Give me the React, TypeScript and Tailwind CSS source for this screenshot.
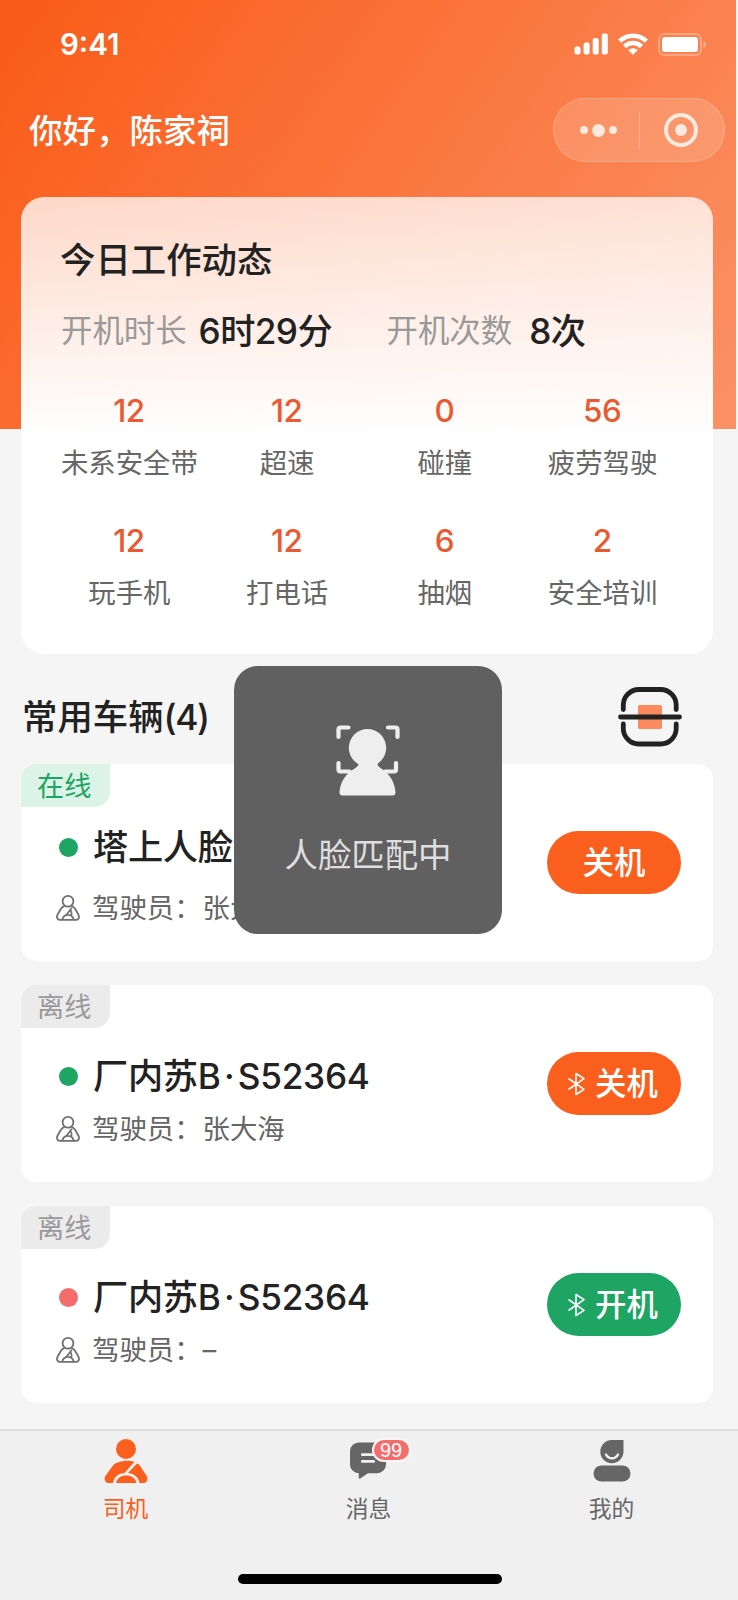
import { Fragment, ReactNode } from "react";
import clsx from "clsx";

type Vehicle = {
  online: boolean;
  name: string;
  driver: string;
  running: boolean;
  action: string;
  bluetooth: boolean;
};

const stats = [
  { value: "12", label: "未系安全带" },
  { value: "12", label: "超速" },
  { value: "0", label: "碰撞" },
  { value: "56", label: "疲劳驾驶" },
  { value: "12", label: "玩手机" },
  { value: "12", label: "打电话" },
  { value: "6", label: "抽烟" },
  { value: "2", label: "安全培训" },
];

const vehicles: Vehicle[] = [
  { online: true, name: "塔上人脸识别", driver: "张大海", running: true, action: "关机", bluetooth: false },
  { online: false, name: "厂内苏B·S52364", driver: "张大海", running: true, action: "关机", bluetooth: true },
  { online: false, name: "厂内苏B·S52364", driver: "–", running: false, action: "开机", bluetooth: true },
];

const StatusBar = () => (
  <div className="flex h-[88px] items-center justify-between pl-[60px] pr-[29px] text-white">
    <span className="text-[29.500px] font-semibold leading-[30px]">9:41</span>
    <div className="flex items-center">
      <svg width="35" height="22" viewBox="0 0 35 22" fill="currentColor">
        <rect x="0.5" y="13.5" width="6" height="8" rx="2" />
        <rect x="9.6" y="9.5" width="6" height="12" rx="2" />
        <rect x="18.7" y="5" width="6" height="16.5" rx="2" />
        <rect x="27.8" y="0.5" width="6" height="21" rx="2" />
      </svg>
      <svg className="ml-[9px]" width="30" height="22" viewBox="0 0 30 22" fill="none" stroke="currentColor" strokeWidth="4.600">
        <path d="M1.600 8.200a19.300 19.300 0 0 1 26.800 0" />
        <path d="M6.500 13.500a12.200 12.200 0 0 1 17 0" />
        <path d="M15 21.800l-4.800-4.700a7 7 0 0 1 9.600 0z" fill="currentColor" stroke="none" />
      </svg>
      <svg className="ml-[10px]" width="49" height="23" viewBox="0 0 49 23">
        <rect x="1" y="1" width="42" height="21" rx="5.5" fill="none" stroke="#fff" strokeOpacity="0.3" strokeWidth="2" />
        <rect x="4" y="4" width="36" height="15" rx="3" fill="#fff" />
        <path d="M45.5 8c3 1.300 3 5.700 0 7z" fill="#fff" fillOpacity="0.4" />
      </svg>
    </div>
  </div>
);

const NavBar = () => (
  <div className="flex h-[84px] items-center justify-between pl-[29px] pr-[11px]">
    <h1 className="pt-px text-[33.500px] font-medium leading-[40px] text-white">你好，陈家祠</h1>
    <div className="flex h-[64px] w-[172px] items-center rounded-full border border-white/20 bg-white/15 text-[#fee9df]">
      <div className="flex w-[85px] items-center justify-center gap-[4px] pl-[3px]">
        <i className="size-[8px] rounded-full bg-current" />
        <i className="size-[13px] rounded-full bg-current" />
        <i className="size-[8px] rounded-full bg-current" />
      </div>
      <div className="h-[37px] w-px bg-white/30" />
      <div className="flex flex-1 items-center justify-center pr-[2px]">
        <div className="flex size-[34px] items-center justify-center rounded-full border-4 border-current">
          <i className="size-[12px] rounded-full bg-current" />
        </div>
      </div>
    </div>
  </div>
);

const WorkCard = () => (
  <section className="-mt-[232px] ml-[21px] h-[457px] w-[692px] rounded-[23px] bg-[linear-gradient(180deg,rgba(255,255,255,0.75)_0%,#fff_53%)] pt-[44px]">
    <h2 className="pl-[39px] text-[35.400px] font-medium leading-[40px] text-[#222]">今日工作动态</h2>
    <div className="mt-[30px] flex h-[40px] items-center pl-[40px] leading-[40px]">
      <span className="text-[31.400px] text-[#999]">开机时长</span>
      <span className="ml-[12px] w-[190px] text-[35.200px] font-medium tracking-[-0.600px] text-[#222]">6时29分</span>
      <span className="-ml-[2px] text-[31.400px] text-[#999]">开机次数</span>
      <span className="ml-[17px] text-[35.200px] font-medium tracking-[-0.600px] text-[#222]">8次</span>
    </div>
    <div className="ml-[29px] mt-[44px] grid w-[631px] grid-cols-4 gap-y-[46px]">
      {stats.map((item) => (
        <div key={item.label} className="flex flex-col items-center gap-[20px]">
          <span className="text-[31.500px] font-medium leading-[32px] tracking-[-0.500px] text-[#ea5a31]">{item.value}</span>
          <span className="pl-px text-[27.400px] leading-[32px] text-[#666]">{item.label}</span>
        </div>
      ))}
    </div>
  </section>
);

const ScanIcon = () => (
  <svg width="64" height="60" viewBox="0 0 64 60" fill="none" stroke="#222" strokeWidth="4.800" strokeLinecap="round">
    <rect x="20" y="18" width="24" height="24" rx="1.500" fill="#fb8b5f" stroke="none" />
    <path d="M5.300 22.500V18A15.600 15.600 0 0 1 21 2.500h21.500A15.600 15.600 0 0 1 58.200 18v4.500" />
    <path d="M5.300 37v4.500A15.600 15.600 0 0 0 21 57h21.500a15.600 15.600 0 0 0 15.700-15.500V37" />
    <path d="M2.500 30h59" />
  </svg>
);

const DriverOutlineIcon = () => (
  <svg width="24" height="26" viewBox="0 0 24 26" fill="none" stroke="#707070" strokeWidth="1.800" strokeLinejoin="round">
    <circle cx="12" cy="6.300" r="5.400" />
    <path d="M8.500 11.200C6.800 11.600 5.800 12.500 4.800 14L1.500 19.800c-1.200 2.400-.2 5 2 5h17c2.200 0 3.200-2.600 2-5L19.200 14c-1-1.500-2-2.400-3.700-2.800" />
    <path d="M6.300 24.500c.8-3 3-4.700 5.700-4.700s4.900 1.700 5.700 4.700M15.800 12.800l-5.300 7M15 15.500c.6 2 1.200 3.500 0 5" />
  </svg>
);

const BluetoothIcon = () => (
  <svg width="17" height="24" viewBox="0 0 17 24" fill="none" stroke="#fff" strokeWidth="1.600" strokeLinejoin="round">
    <path d="M0.500 6.500L16 17.300l-8 5.200V1.500l8 5.200L0.500 17.500" />
  </svg>
);

// the dot of a plate number gets some room on both sides
const PlateName = ({ name }: { name: string }) => (
  <>
    {name.split("·").map((part, index) => (
      <Fragment key={index}>
        {index > 0 && <span className="px-[3.500px]">·</span>}
        {part}
      </Fragment>
    ))}
  </>
);

const VehicleCard = ({ vehicle }: { vehicle: Vehicle }) => (
  <li className="flex h-[197px] w-[692px] items-center justify-between overflow-hidden rounded-[15px] bg-white pr-[32px]">
    <div className="h-full">
      <div
        className={clsx(
          "h-[43px] w-[89px] rounded-br-[15px] pl-[16px] pt-px text-[27.200px] leading-[43px]",
          vehicle.online ? "bg-[#dcf4e8] text-[#1ea463]" : "bg-[#ebebeb] text-[#999]"
        )}
      >
        {vehicle.online ? "在线" : "离线"}
      </div>
      <div className={clsx("flex items-center pl-[38px]", vehicle.online ? "mt-[20px]" : "mt-[28px]")}>
        <i className={clsx("size-[19px] rounded-full", vehicle.running ? "bg-[#1ea463]" : "bg-[#f56c6c]")} />
        <h3 className="ml-[15px] pt-px text-[35.200px] font-medium leading-[39px] tracking-[-0.300px] text-[#222]">
          <PlateName name={vehicle.name} />
        </h3>
      </div>
      <div className={clsx("flex items-center pl-[35px]", vehicle.online ? "mt-[25px]" : "mt-[17px]")}>
        <DriverOutlineIcon />
        <span className="ml-[12px] text-[27.400px] leading-[32px] text-[#666]">
          驾驶员：<span className="pl-px">{vehicle.driver}</span>
        </span>
      </div>
    </div>
    <button
      className={clsx(
        "flex h-[63px] w-[134px] items-center justify-center rounded-full pt-px text-[31.400px] font-medium leading-[40px] text-white",
        vehicle.running ? "bg-[#fa5f1e]" : "bg-[#1ea463]",
        vehicle.bluetooth && "gap-[10px] pr-[2px]"
      )}
    >
      {vehicle.bluetooth && <BluetoothIcon />}
      {vehicle.action}
    </button>
  </li>
);

const MatchingToast = () => (
  <div className="absolute left-[234px] top-[666px] flex size-[268px] flex-col items-center rounded-[24px] bg-[#606060] pt-[59px]">
    <svg width="64" height="71" viewBox="0 0 64 71" fill="none" stroke="#eee" strokeWidth="4.200" strokeLinecap="round">
      <path d="M2.500 12V4.500a2 2 0 0 1 2-2H12.500M52 2.500H59.500a2 2 0 0 1 2 2V12" />
      <path d="M2.500 38v6.500a2 2 0 0 0 2 2h9M60 38v6.500a2 2 0 0 1-2 2h-9" />
      <circle cx="31.500" cy="22.800" r="18.700" fill="#eee" stroke="none" />
      <path d="M21 37c3 3 1 4-3 7C9 49 4 58 3.500 67.500c0 2 1 3 3 3h50c2 0 3-1 3-3C59 58 54 49 46 44c-4-3-6-4-3-7z" fill="#eee" stroke="none" />
    </svg>
    <p className="mt-[39px] text-[33.400px] leading-[40px] text-[#dedede]">人脸匹配中</p>
  </div>
);

const TabItem = ({ label, active, children }: { label: string; active?: boolean; children: ReactNode }) => (
  <div className={clsx("flex flex-col items-center", active ? "text-[#fa5f1e]" : "text-[#666]")}>
    <div className="flex h-[50px] items-center">{children}</div>
    <span className="mt-[7px] text-[22.800px] leading-[32px]">{label}</span>
  </div>
);

const TabBar = () => (
  <nav className="mt-[26px] h-[171px] border-t-2 border-[#dedede] bg-[#f0f0f0]">
    <div className="ml-[4px] grid w-[729px] grid-cols-3 pt-[5px]">
      <TabItem label="司机" active>
        <svg width="44" height="44" viewBox="0 0 44 44" fill="currentColor">
          <circle cx="22" cy="10" r="10" />
          <path d="M14 23.500c4-2 11-2.200 16.500-.8L20.500 34C14 34.500 10 38 9 44H3.500C1 43 0 40 1 37.500L9 26.500c1.500-1.800 3-2.300 5-3z" />
          <path d="M33 24.500c1 .4 2 1 3 2.200l7 10.800c1 2.500 0 5.500-2.500 6.500H35.500c-1-5.500-5-9.200-11.500-9.900z" />
          <path d="M12 44c1-5 5-7.500 10.200-7.500S31.500 39 32.500 44z" />
        </svg>
      </TabItem>
      <TabItem label="消息">
        <div className="relative pr-[2px]">
          <svg className="block" width="36" height="38" viewBox="0 0 37 38">
            <path d="M9 0h19a9 9 0 0 1 9 9v13.500a9 9 0 0 1-9 9H18.500L10.500 37c-1 .5-1.500 0-1.500-1v-4.500a9 9 0 0 1-9-9V9a9 9 0 0 1 9-9z" fill="currentColor" />
            <path d="M11.500 12.500h14M11.500 19.300h14" stroke="#f0f0f0" strokeWidth="2.800" />
          </svg>
          <span className="absolute -top-[4px] left-[22px] h-[24px] w-[39px] rounded-full border-2 border-[#f8f8f8] bg-[#f56c6c] text-center font-['Liberation_Sans'] text-[20px] leading-[20px] text-white">99</span>
        </div>
      </TabItem>
      <TabItem label="我的">
        <svg width="38" height="42" viewBox="0 0 38 42">
          <path d="M19 0h11.500v12A11.600 11.600 0 1 1 19 0z" fill="currentColor" />
          <path d="M13 14.500c2.500 5 9.500 5 12 0" fill="none" stroke="#f0f0f0" strokeWidth="2.400" strokeLinecap="round" />
          <rect x="0.500" y="25.500" width="37" height="16" rx="8" fill="currentColor" />
        </svg>
      </TabItem>
    </div>
    <div className="ml-[238px] mt-[49px] h-[10px] w-[264px] rounded-full bg-black" />
  </nav>
);

export default function App() {
  return (
    <div className="relative h-[1600px] w-[738px] overflow-hidden bg-[#f5f5f5] font-[Inter,'Noto_Sans_CJK_SC',sans-serif]">
      <header className="h-[429px] w-[736px] bg-[linear-gradient(125deg,#fa5d1b_5%,#fb9266_100%)]">
        <StatusBar />
        <NavBar />
      </header>
      <WorkCard />
      <div className="flex h-[110px] items-center justify-between pl-[22px] pr-[56px] pt-[16px]">
        <h2 className="pt-px text-[35.400px] font-medium leading-[40px] text-[#222]">
          常用车辆<span className="tracking-[-1.400px]">(4)</span>
        </h2>
        <ScanIcon />
      </div>
      <ul className="flex flex-col gap-[24px] pl-[21px]">
        {vehicles.map((vehicle, index) => (
          <VehicleCard key={index} vehicle={vehicle} />
        ))}
      </ul>
      <TabBar />
      <MatchingToast />
    </div>
  );
}
